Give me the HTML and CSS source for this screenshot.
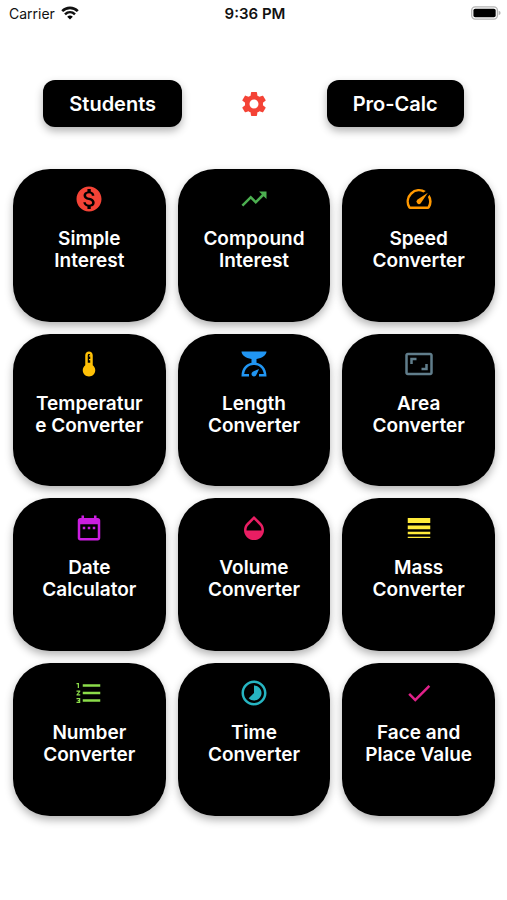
FILE: index.html
```html
<!DOCTYPE html>
<html lang="en">
<head>
<meta charset="utf-8">
<meta name="viewport" content="width=device-width, initial-scale=1">
<title>Calculators</title>
<link rel="stylesheet" href="styles.css">
</head>
<body>
<div class="status">
  <div class="carrier">
    <span>Carrier</span>
    <svg class="wifi" viewBox="0 0 18 14" aria-hidden="true"><path d="M1.200 5.200C5.600.8 12.400.8 16.800 5.200" fill="none" stroke="currentColor" stroke-width="2.600"/><path d="M4 8.400C6.900 5.600 11.100 5.600 14 8.400" fill="none" stroke="currentColor" stroke-width="2.500"/><path d="M6.200 10.700Q9 8.300 11.800 10.700L9 13.600z"/></svg>
  </div>
  <time class="time">9:36 PM</time>
  <svg class="battery" viewBox="0 0 31 14" aria-hidden="true"><rect x=".7" y=".7" width="26.600" height="12.600" rx="3.600" fill="#fff" stroke="#b4b4b4" stroke-width="1.400"/><rect x="2.500" y="2.500" width="23" height="9" rx="1.800"/><path d="M28.600 4.800q2 .6 2 2.200t-2 2.200z" fill="#b4b4b4"/></svg>
</div>
<header class="top">
  <button class="pill" type="button">Students</button>
  <button class="settings" type="button" aria-label="Settings"><svg class="icon" viewBox="0 0 24 24"><path d="M19.140 12.940c.04-.3.060-.61.060-.94 0-.32-.02-.64-.07-.94l2.030-1.580c.18-.14.230-.41.120-.61l-1.920-3.320c-.12-.22-.37-.29-.59-.22l-2.390.96c-.5-.38-1.030-.7-1.620-.94l-.36-2.540c-.04-.24-.24-.41-.48-.41h-3.840c-.24 0-.43.17-.47.41l-.36 2.540c-.59.24-1.130.57-1.620.94l-2.390-.96c-.22-.08-.47 0-.59.22L2.740 8.870c-.12.21-.08.470.12.610l2.030 1.580c-.05.3-.09.630-.09.940s.02.640.070.940l-2.030 1.580c-.18.140-.23.410-.12.610l1.920 3.320c.12.220.370.290.590.220l2.390-.96c.5.380 1.030.7 1.620.940l.36 2.540c.05.240.240.410.480.410h3.840c.24 0 .44-.17.470-.41l.36-2.540c.59-.24 1.130-.56 1.620-.94l2.390.96c.22.080.470 0 .59-.22l1.920-3.320c.12-.22.070-.47-.12-.61l-2.010-1.580zM12 15.600c-1.980 0-3.600-1.620-3.600-3.600s1.620-3.600 3.600-3.600 3.600 1.620 3.600 3.600-1.620 3.600-3.600 3.600z"/></svg></button>
  <button class="pill" type="button">Pro-Calc</button>
</header>
<main class="grid">
  <button class="card" type="button"><svg class="icon red" viewBox="0 0 24 24"><path d="M12 2C6.480 2 2 6.480 2 12s4.480 10 10 10 10-4.480 10-10S17.520 2 12 2zm1.410 16.090V20h-2.670v-1.930c-1.710-.36-3.160-1.460-3.270-3.400h1.960c.1 1.050.82 1.870 2.650 1.870 1.960 0 2.400-.98 2.400-1.590 0-.83-.44-1.610-2.670-2.140-2.480-.6-4.180-1.620-4.180-3.670 0-1.720 1.390-2.840 3.110-3.210V4h2.670v1.950c1.860.45 2.790 1.860 2.850 3.390H14.300c-.05-1.110-.64-1.870-2.220-1.870-1.500 0-2.400.68-2.400 1.640 0 .84.65 1.390 2.670 1.910s4.180 1.390 4.180 3.910c-.01 1.830-1.380 2.830-3.120 3.160z"/></svg><span class="label">Simple Interest</span></button>
  <button class="card" type="button"><svg class="icon green" viewBox="0 0 24 24"><path d="M16 6l2.290 2.290-4.880 4.880-4-4L2 16.590 3.410 18l6-6 4 4 6.300-6.290L22 12V6z"/></svg><span class="label">Compound Interest</span></button>
  <button class="card" type="button"><svg class="icon orange" viewBox="0 0 24 24"><path d="M20.380 8.570l-1.230 1.850a8 8 0 0 1-.22 7.580H5.070A8 8 0 0 1 15.580 6.850l1.850-1.230A10 10 0 0 0 3.350 19a2 2 0 0 0 1.720 1h13.850a2 2 0 0 0 1.740-1 10 10 0 0 0-.27-10.440z"/><path d="M10.590 15.410a2 2 0 0 0 2.830 0l5.660-8.490-8.490 5.660a2 2 0 0 0 0 2.830z"/></svg><span class="label">Speed Converter</span></button>
  <button class="card" type="button"><svg class="icon amber" viewBox="0 0 24 24"><path d="M15 13V5c0-1.660-1.340-3-3-3S9 3.340 9 5v8c-1.210.91-2 2.370-2 4 0 2.760 2.240 5 5 5s5-2.240 5-5c0-1.630-.79-3.090-2-4zm-4-8c0-.55.45-1 1-1s1 .45 1 1h-1v1h1v2h-1v1h1v2h-2V5z"/></svg><span class="label">Temperature Converter</span></button>
  <button class="card" type="button"><svg class="icon blue" viewBox="0 0 24 24"><path d="M14 11V8c4.560-.58 8-3.100 8-6H2c0 2.900 3.440 5.420 8 6v3c-3.680.73-8 3.610-8 11h6v-2H4.130c.93-6.830 6.650-7.200 7.870-7.200s6.940.37 7.870 7.200H16v2h6c0-7.390-4.320-10.270-8-11z"/><path d="M12 22c-1.100 0-2-.9-2-2 0-.55.22-1.050.59-1.410C11.390 17.790 16 16 16 16s-1.790 4.610-2.590 5.410c-.36.37-.86.590-1.410.590z"/></svg><span class="label">Length Converter</span></button>
  <button class="card" type="button"><svg class="icon slate" viewBox="0 0 24 24"><path d="M19 12h-2v3h-3v2h5v-5zM7 9h3V7H5v5h2V9zm14-6H3c-1.100 0-2 .9-2 2v14c0 1.100.9 2 2 2h18c1.100 0 2-.9 2-2V5c0-1.100-.9-2-2-2zm0 16.010H3V4.990h18v14.020z"/></svg><span class="label">Area Converter</span></button>
  <button class="card" type="button"><svg class="icon purple" viewBox="0 0 24 24"><path d="M9 11H7v2h2v-2zm4 0h-2v2h2v-2zm4 0h-2v2h2v-2zm2-7h-1V2h-2v2H8V2H6v2H5c-1.110 0-1.990.9-1.990 2L3 20c0 1.100.89 2 2 2h14c1.100 0 2-.9 2-2V6c0-1.100-.9-2-2-2zm0 16H5V9h14v11z"/></svg><span class="label">Date Calculator</span></button>
  <button class="card" type="button"><svg class="icon pink" viewBox="0 0 24 24"><path d="M17.660 8L12 2.350 6.340 8C4.780 9.560 4 11.640 4 13.640s.78 4.110 2.340 5.670 3.610 2.350 5.660 2.350 4.100-.79 5.660-2.350S20 15.640 20 13.640 19.220 9.560 17.660 8zM6 14c.01-2 .62-3.270 1.760-4.400L12 5.270l4.240 4.380C17.380 10.770 17.990 12 18 14H6z"/></svg><span class="label">Volume Converter</span></button>
  <button class="card" type="button"><svg class="icon yellow" viewBox="0 0 24 24"><path d="M3 17h18v-2H3v2zm0 3h18v-1H3v1zm0-7h18v-3H3v3zm0-9v4h18V4H3z"/></svg><span class="label">Mass Converter</span></button>
  <button class="card" type="button"><svg class="icon lime" viewBox="0 0 24 24"><path d="M2 17h2v.5H3v1h1v.5H2v1h3v-4H2v1zm1-9h1V4H2v1h1v3zm-1 3h1.800L2 13.100v.9h3v-1H3.200L5 10.900V10H2v1zm5-6v2h14V5H7zm0 14h14v-2H7v2zm0-6h14v-2H7v2z"/></svg><span class="label">Number Converter</span></button>
  <button class="card" type="button"><svg class="icon teal" viewBox="0 0 24 24"><path d="M16.240 7.760C15.070 6.590 13.540 6 12 6v6l-4.240 4.240c2.340 2.340 6.140 2.340 8.490 0 2.340-2.340 2.340-6.140-.01-8.480zM12 2C6.480 2 2 6.480 2 12s4.480 10 10 10 10-4.480 10-10S17.520 2 12 2zm0 18c-4.420 0-8-3.580-8-8s3.580-8 8-8 8 3.580 8 8-3.580 8-8 8z"/></svg><span class="label">Time Converter</span></button>
  <button class="card" type="button"><svg class="icon magenta" viewBox="0 0 24 24"><path d="M9 16.170L4.830 12l-1.420 1.410L9 19 21 7l-1.410-1.410z"/></svg><span class="label">Face and Place Value</span></button>
</main>
</body>
</html>
```
FILE: styles.css
```css
* {
  box-sizing: border-box;
}

body {
  margin: 0;
  background: #fff;
  color: #111;
  font-family: Inter, "Liberation Sans", sans-serif;
}

button {
  margin: 0;
  border: 0;
  font: inherit;
  cursor: pointer;
}

.status {
  display: grid;
  grid-template-columns: 1fr auto 1fr;
  align-items: center;
  height: 26px;
  padding: 0 6px 0 9px;
  font-size: 14px;
}

.carrier {
  display: flex;
  align-items: center;
  gap: 6px;
}

.wifi {
  width: 18px;
  height: 14px;
}

.time {
  font-size: 15px;
  font-weight: 600;
}

.battery {
  width: 30px;
  height: 14px;
  justify-self: end;
}

.top {
  display: flex;
  justify-content: space-evenly;
  align-items: center;
  padding: 54px 0 42px;
}

.pill,
.card {
  background: #000;
  color: #fff;
  font-size: 19px;
  font-weight: 600;
  line-height: 22px;
  box-shadow: 0 4px 8px rgba(0, 0, 0, 0.3);
}

.pill {
  height: 47px;
  padding: 0 26px;
  border-radius: 12px;
  font-size: 20px;
}

.settings {
  display: flex;
  justify-content: center;
  width: 58px;
  padding: 0;
  background: none;
  color: #f44336;
}

.icon {
  display: block;
  flex: none;
  width: 30px;
  height: 30px;
  fill: currentColor;
}

.grid {
  display: grid;
  grid-template-columns: repeat(3, minmax(0, 1fr));
  gap: 12px;
  padding: 0 12px 24px 13px;
}

.card {
  display: flex;
  flex-direction: column;
  align-items: center;
  justify-content: flex-start;
  gap: 14px;
  aspect-ratio: 1;
  padding: 15px 20px;
  border-radius: 37px;
}

.label {
  max-width: 100%;
  text-align: center;
  overflow-wrap: anywhere;
}

.red { color: #f44336; }
.green { color: #4caf50; }
.orange { color: #ff9800; }
.amber { color: #ffc107; }
.blue { color: #2196f3; }
.slate { color: #607d8b; }
.purple { color: #cb1ee0; }
.pink { color: #e91e63; }
.yellow { color: #ffeb3b; }
.lime { color: #8bdc4a; }
.teal { color: #26b5c2; }
.magenta { color: #e0218a; }
```
